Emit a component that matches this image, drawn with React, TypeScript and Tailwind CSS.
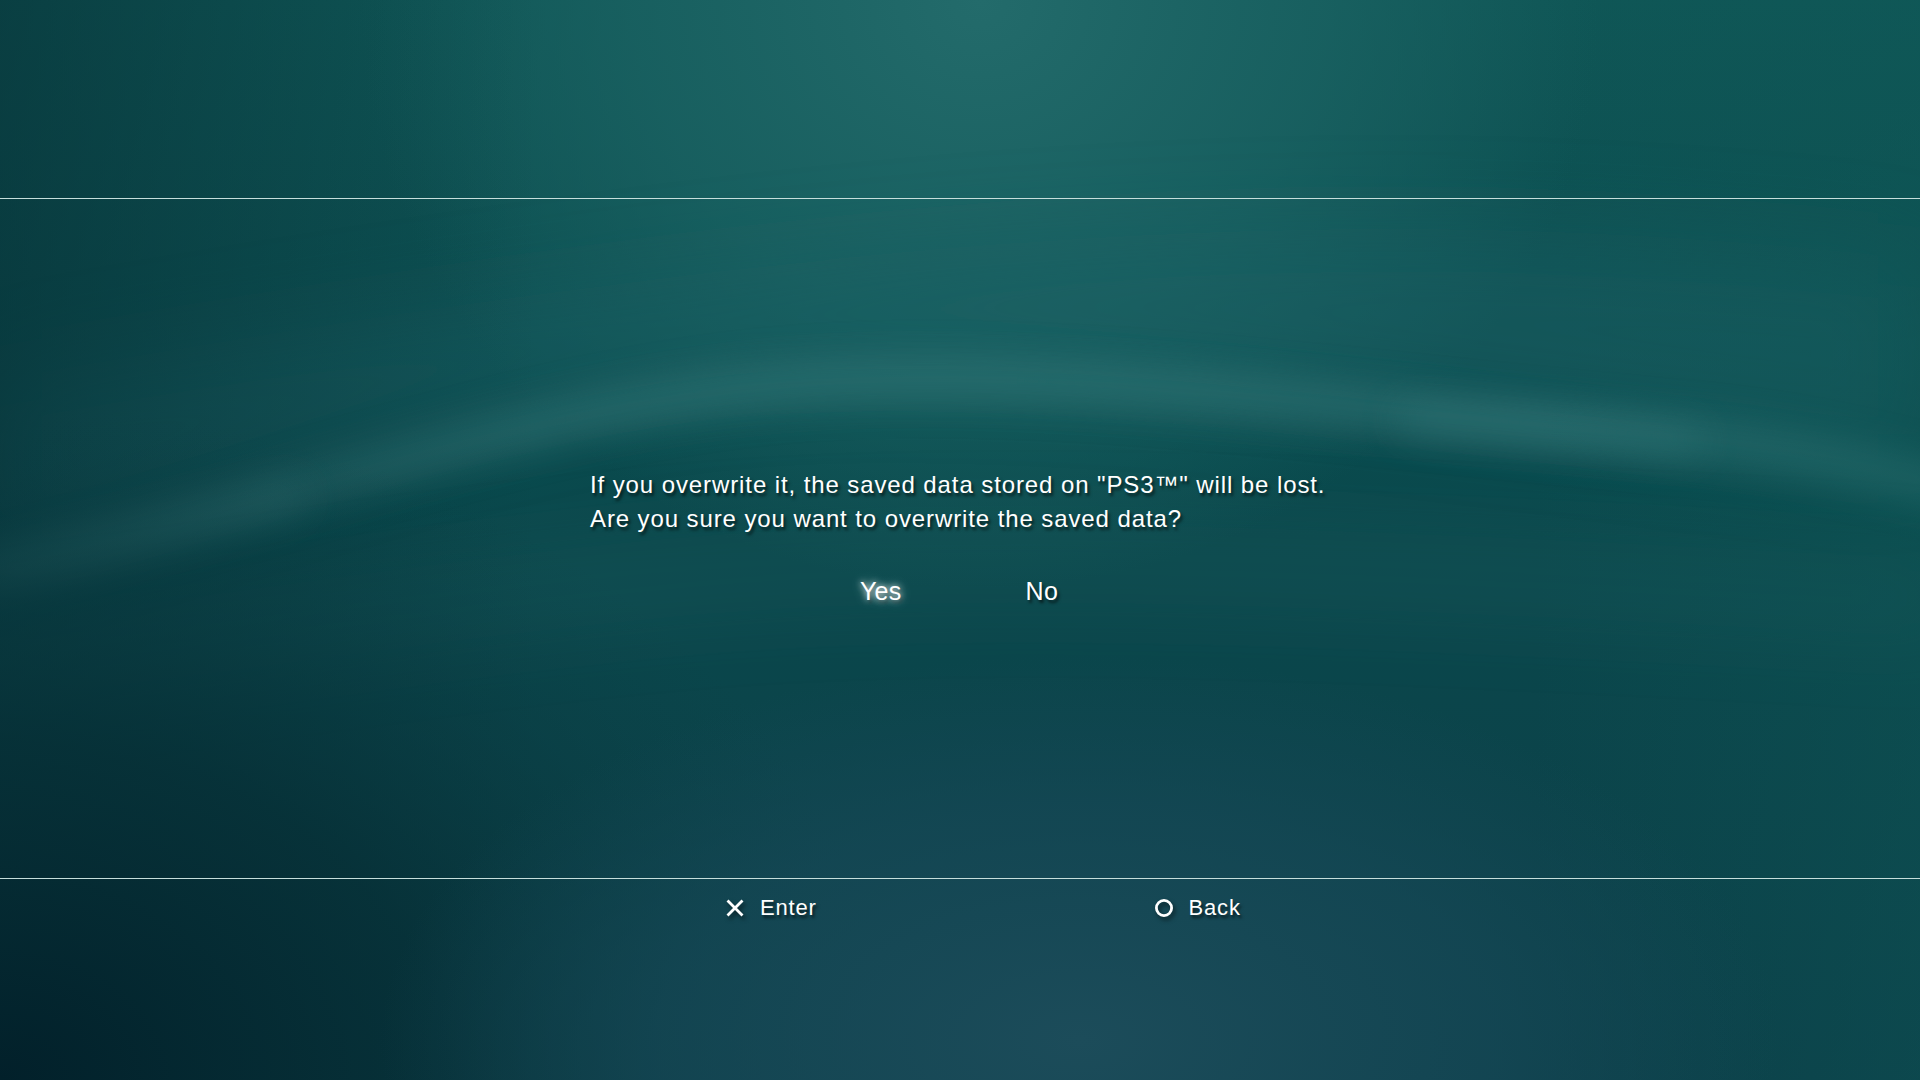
import React from 'react'

// PS3 style wave backdrop
function WaveBackground() {
  return (
    <svg
      className="absolute inset-0 h-full w-full"
      viewBox="0 0 1920 1080"
      preserveAspectRatio="none"
    >
      <defs>
        <radialGradient id="topGlow" cx="980" cy="0" r="620" gradientUnits="userSpaceOnUse" gradientTransform="translate(980 0) scale(1 0.95) translate(-980 0)">
          <stop offset="0" stopColor="#236b6b" />
          <stop offset="0.55" stopColor="#1a6262" stopOpacity="0.8" />
          <stop offset="1" stopColor="#1a6262" stopOpacity="0" />
        </radialGradient>
        <radialGradient id="bottomDark" cx="0" cy="1080" r="900" gradientUnits="userSpaceOnUse" gradientTransform="translate(0 1080) scale(1 0.75) translate(0 -1080)">
          <stop offset="0" stopColor="#02202a" />
          <stop offset="0.5" stopColor="#062f36" stopOpacity="0.8" />
          <stop offset="1" stopColor="#0a3e44" stopOpacity="0" />
        </radialGradient>
        <radialGradient id="bottomBlue" cx="1080" cy="1040" r="700" gradientUnits="userSpaceOnUse" gradientTransform="translate(1080 1040) scale(1 0.55) translate(-1080 -1040)">
          <stop offset="0" stopColor="#1c4c5a" />
          <stop offset="0.6" stopColor="#164856" stopOpacity="0.7" />
          <stop offset="1" stopColor="#164856" stopOpacity="0" />
        </radialGradient>
        <linearGradient id="base" x1="0" y1="0" x2="0" y2="1">
          <stop offset="0" stopColor="#0f5656" />
          <stop offset="0.5" stopColor="#0b484c" />
          <stop offset="1" stopColor="#0b3e48" />
        </linearGradient>
        <linearGradient id="sideShade" x1="0" y1="0" x2="1" y2="0">
          <stop offset="0" stopColor="#052c32" stopOpacity="0.55" />
          <stop offset="0.28" stopColor="#062e34" stopOpacity="0" />
          <stop offset="0.8" stopColor="#0f5a58" stopOpacity="0" />
          <stop offset="1" stopColor="#0f5a58" stopOpacity="0.35" />
        </linearGradient>
        <filter id="blurBig" filterUnits="userSpaceOnUse" x="-200" y="-200" width="2320" height="1480">
          <feGaussianBlur stdDeviation="20" />
        </filter>
        <filter id="blurWide" filterUnits="userSpaceOnUse" x="-200" y="-200" width="2320" height="1480">
          <feGaussianBlur stdDeviation="45" />
        </filter>
      </defs>
      <rect width="1920" height="1080" fill="url(#base)" />
      <rect width="1920" height="1080" fill="url(#topGlow)" />
      {/* broad lighter sheet above the wave */}
      <path
        d="M0 560 C 300 470, 550 380, 800 370 C 1100 360, 1400 400, 1920 470 L1920 260 C 1400 200, 900 220, 0 380 Z"
        fill="#1d6266"
        opacity="0.45"
        filter="url(#blurWide)"
      />
      {/* main wave highlight */}
      <path
        d="M-40 580 C 200 530, 500 410, 780 385 C 1050 362, 1350 410, 1700 440 C 1800 450, 1880 470, 1960 490"
        fill="none"
        stroke="#3c8282"
        strokeWidth="30"
        opacity="0.6"
        filter="url(#blurBig)"
      />
      {/* brighter streaks on the wave */}
      <path
        d="M-20 570 C 100 545, 200 520, 300 495"
        fill="none"
        stroke="#4a8e8e"
        strokeWidth="22"
        opacity="0.45"
        filter="url(#blurBig)"
      />
      <path
        d="M1400 418 C 1500 425, 1600 432, 1700 442"
        fill="none"
        stroke="#4a8e8e"
        strokeWidth="22"
        opacity="0.35"
        filter="url(#blurBig)"
      />
      {/* lower faint wave */}
      <path
        d="M-40 665 C 200 640, 420 600, 700 575 C 950 555, 1250 560, 1960 600"
        fill="none"
        stroke="#2a6e70"
        strokeWidth="40"
        opacity="0.35"
        filter="url(#blurWide)"
      />
      <rect width="1920" height="1080" fill="url(#sideShade)" />
      <rect width="1920" height="1080" fill="url(#bottomDark)" />
      <rect width="1920" height="1080" fill="url(#bottomBlue)" />
    </svg>
  )
}

function CrossIcon() {
  return (
    <svg width="18" height="18" viewBox="0 0 18 18" className="drop-shadow-[2px_3px_2px_rgba(0,0,0,0.55)]">
      <path d="M2.5 2.5 L15.5 15.5 M15.5 2.5 L2.5 15.5" stroke="#ffffff" strokeWidth="2.8" strokeLinecap="square" />
    </svg>
  )
}

function CircleIcon() {
  return (
    <svg width="20" height="20" viewBox="0 0 20 20" className="drop-shadow-[2px_3px_2px_rgba(0,0,0,0.55)]">
      <circle cx="10" cy="10" r="7.6" fill="none" stroke="#ffffff" strokeWidth="2.8" />
    </svg>
  )
}

export default function App() {
  const shadow = '[text-shadow:2px_3px_3px_rgba(0,0,0,0.6)]'

  return (
    <div className="relative h-[1080px] w-[1920px] overflow-hidden font-['Liberation_Sans',Arial,sans-serif] text-white">
      <WaveBackground />

      <div className="relative flex h-full flex-col">
        {/* top band */}
        <div className="h-[198px]" />
        <div className="h-px bg-[#c6dedb]" />

        {/* dialog */}
        <div className="flex h-[679px] flex-col">
          <div className={`mx-auto mt-[269px] w-[740px] text-[24px] leading-[34px] tracking-[0.9px] ${shadow}`}>
            <p>If you overwrite it, the saved data stored on "PS3™" will be lost.</p>
            <p>Are you sure you want to overwrite the saved data?</p>
          </div>

          <div className="mt-[38px] flex justify-center gap-[124px] pr-[2px] text-[25px] leading-[34px] tracking-[0.3px]">
            <span className="[text-shadow:0_0_6px_rgba(255,255,255,0.9),0_0_12px_rgba(220,255,250,0.6),2px_3px_3px_rgba(0,0,0,0.4)]">
              Yes
            </span>
            <span className={shadow}>No</span>
          </div>
        </div>

        <div className="h-px bg-[#c6dedb]" />

        {/* button guide */}
        <div className="flex items-center pl-[726px] pt-[16px] text-[22px] leading-[26px] tracking-[0.8px]">
          <div className="flex items-center gap-[16px]">
            <CrossIcon />
            <span className={shadow}>Enter</span>
          </div>
          <div className="ml-[337px] flex items-center gap-[15px]">
            <CircleIcon />
            <span className={shadow}>Back</span>
          </div>
        </div>
      </div>
    </div>
  )
}
